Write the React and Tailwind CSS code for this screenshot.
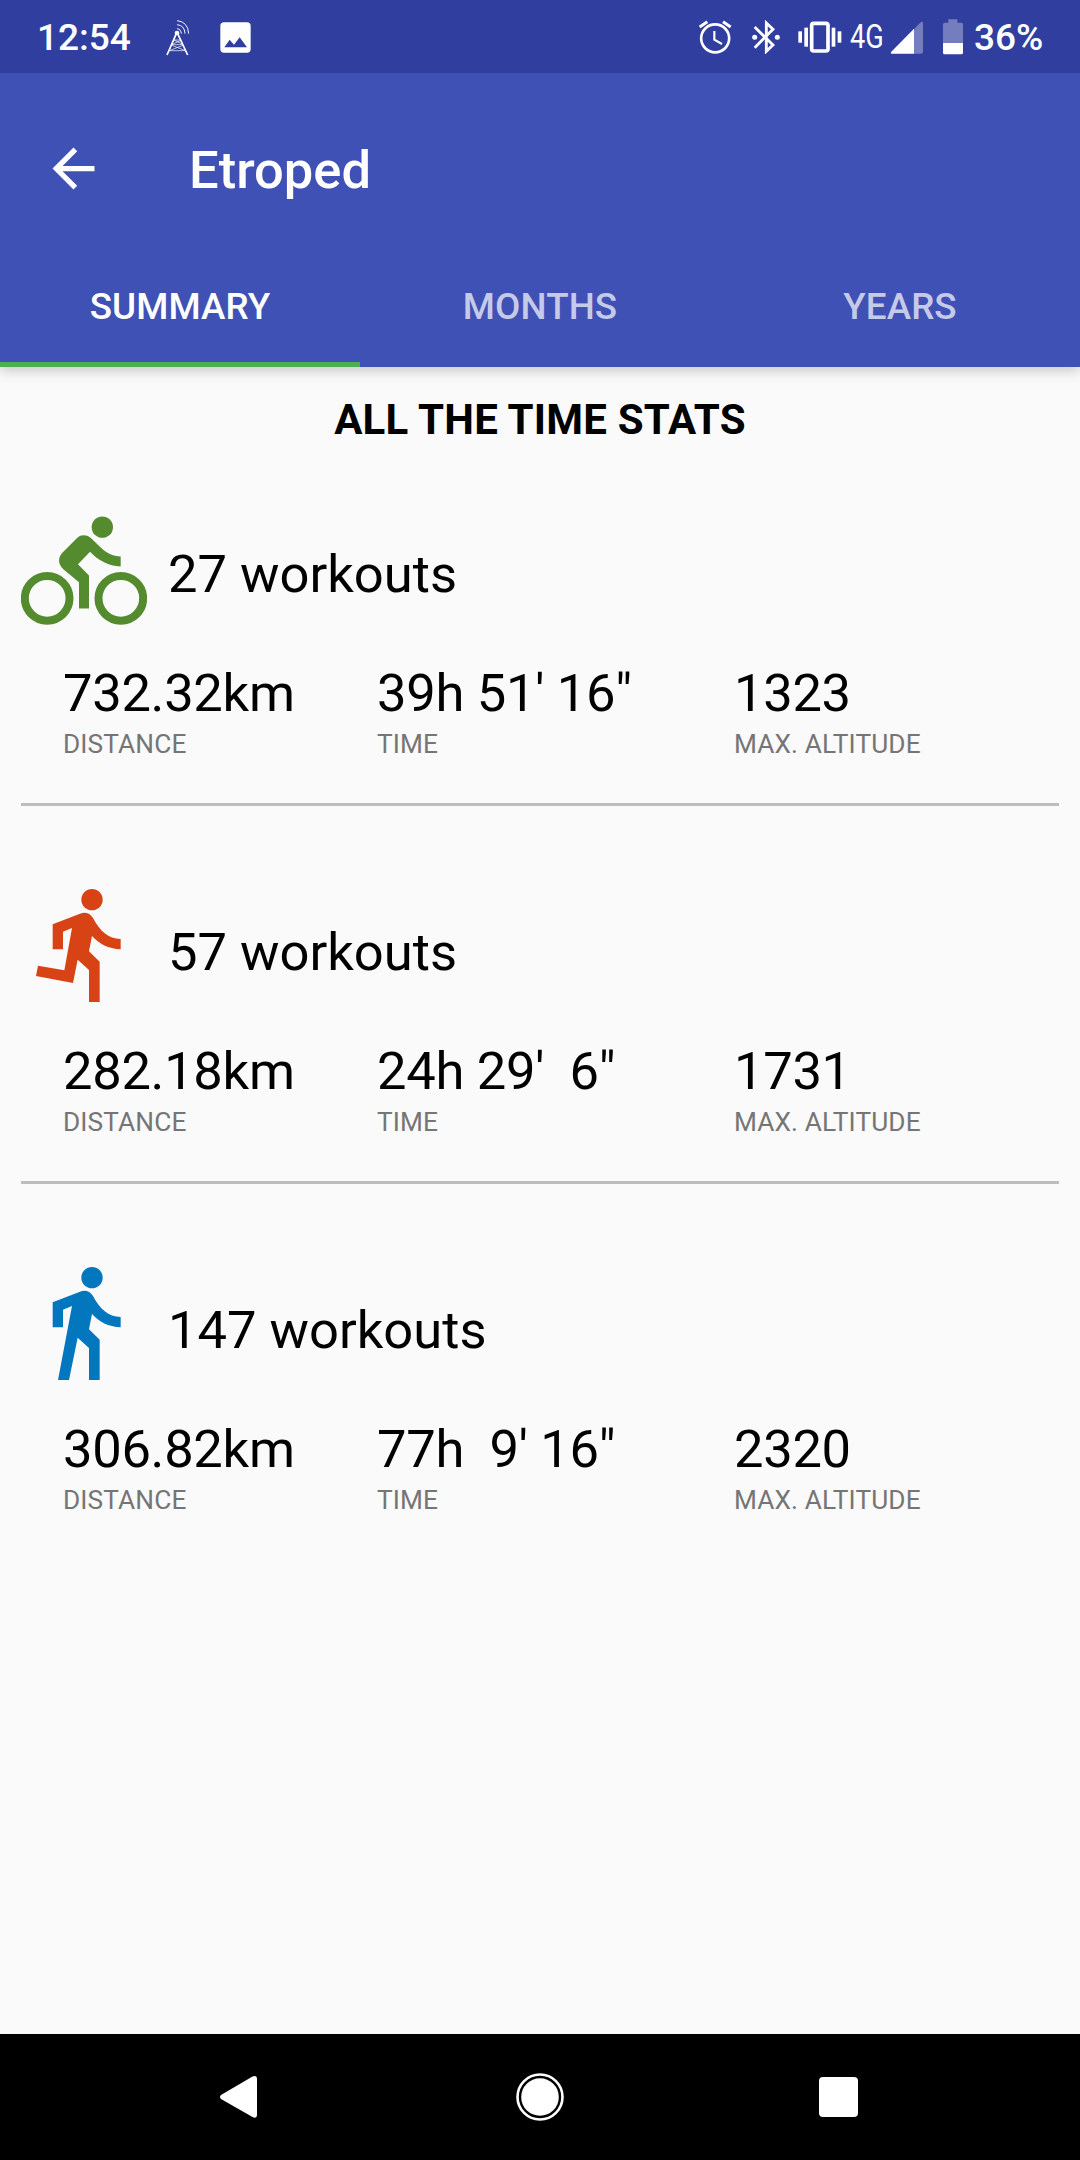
import React from "react";

const AntennaIcon = () => (
  <svg className="block h-[40px] w-[26px]" viewBox="495 48 78 120" fill="none" stroke="#fff">
    <circle cx="531" cy="96" r="7" fill="#fff" stroke="none" />
    <path d="M529 98 L501 162 M533 98 L563 162" strokeWidth="5" />
    <path d="M522 117 H541 M522 117 L548 130 M541 119 L514 131 M514 131 H548 M514 132 L556 149 M549 133 L508 149 M508 149 L556 149" strokeWidth="2" />
    <path d="M531 83 Q543 84 544 98 M531 71 Q554 73 555 98 M531 59 Q564 62 566 98" strokeWidth="2.8" />
  </svg>
);

const ImageIcon = () => (
  <svg className="block h-[31px] w-[31px]" viewBox="0 0 93 93">
    <path fillRule="evenodd" fill="#fff" d="M12 1 H81 Q92 1 92 12 V81 Q92 92 81 92 H12 Q1 92 1 81 V12 Q1 1 12 1 Z M13 76 H81 L59 46 L42 68 L29 53 Z" />
  </svg>
);

const AlarmIcon = () => (
  <svg className="block h-[34px] w-[34px]" viewBox="53 58 102 102" fill="none" stroke="#fff">
    <circle cx="104.500" cy="113" r="42" strokeWidth="8" />
    <path d="M58 79 L81 63 M128 63 L151 79" strokeWidth="9" />
    <path d="M102 91 V117 L125 130" strokeWidth="6.500" />
  </svg>
);

const BluetoothIcon = () => (
  <svg className="block h-[34px] w-[30px]" viewBox="212 58 90 102" fill="none" stroke="#fff">
    <path d="M223 79 L278 133 L258 152 V67 L278 86 L223 141" strokeWidth="8.500" />
    <circle cx="223" cy="110" r="7.500" fill="#fff" stroke="none" />
    <circle cx="291" cy="110" r="7.500" fill="#fff" stroke="none" />
  </svg>
);

const VibrateIcon = () => (
  <svg className="block h-[34px] w-[44px]" viewBox="353 58 132 102" fill="#fff">
    <rect x="354" y="92" width="11" height="34" />
    <rect x="372" y="81" width="11" height="57" />
    <rect x="454" y="81" width="11" height="57" />
    <rect x="472" y="92" width="11" height="34" />
    <rect x="394" y="68" width="49" height="83" rx="6" fill="none" stroke="#fff" strokeWidth="11" />
  </svg>
);

const SignalIcon = () => (
  <svg className="block h-[34px] w-[34px]" viewBox="630 60 102 102" fill="#fff">
    <path d="M702 88 L722 67 Q729 62 729 70 V155 Q729 161 723 161 H702 Z" opacity="0.330" />
    <path d="M702 86 V161 H636 Q630 160 634 155 Z" />
  </svg>
);

const BatteryIcon = () => (
  <svg className="block h-[36px] w-[20px]" viewBox="788 56 60 108" fill="#fff">
    <path d="M804 57 H831 V67 H843 Q848 67 848 72 V128 H788 V72 Q788 67 793 67 H804 Z" opacity="0.330" />
    <path d="M788 128 H848 V157 Q848 162 843 162 H793 Q788 162 788 157 Z" />
  </svg>
);

const BikeIcon = () => (
  <svg className="block h-[126px] w-[126px]" viewBox="63 55.500 378 378" fill="#558b2f">
    <circle cx="307" cy="110" r="32" />
    <circle cx="141.500" cy="323.500" r="67" fill="none" stroke="#558b2f" strokeWidth="24" />
    <circle cx="362.500" cy="323.500" r="67" fill="none" stroke="#558b2f" strokeWidth="24" />
    <path d="M237 354 V275 L190 236 C174 222 173 202 187 187 L232 142 C242 132 260 132 272 142 L302 171 C320 188 338 197 362 198 V228 C325 226 297 212 270 184 L234 221 L267 255 V354 Z" />
  </svg>
);

const RunIcon = () => (
  <svg className="block h-[126px] w-[126px]" viewBox="63 33 378 378" fill="#d84315">
    <circle cx="276" cy="89" r="32" />
    <path d="M158 163 L240 131 C256 125 270 130 279 144 C300 184 325 206 362 207 V238 C325 236 297 222 276 198 L267 244 L299 275 V396 H267 V300 L233 269 L219 339 L108 318 L114 287 L193 301 L216 174 L189 185 V238 H158 Z" />
  </svg>
);

const WalkIcon = () => (
  <svg className="block h-[126px] w-[126px]" viewBox="63 27 378 378" fill="#0277bd">
    <circle cx="276" cy="83" r="32" />
    <path d="M158 157 L240 125 C256 119 270 124 279 138 C300 178 325 200 362 201 V232 C325 230 297 216 276 192 L267 238 L299 269 V390 H267 V294 L233 263 L207 390 H174 L216 168 L189 179 V232 H158 Z" />
  </svg>
);

const sports = [
  { Icon: BikeIcon, iconClass: "mt-[6px]", count: 27, distance: "732.32km", time: "39h 51' 16\"", altitude: "1323" },
  { Icon: RunIcon, iconClass: "", count: 57, distance: "282.18km", time: "24h 29'  6\"", altitude: "1731" },
  { Icon: WalkIcon, iconClass: "", count: 147, distance: "306.82km", time: "77h  9' 16\"", altitude: "2320" },
];

function Stat({ value, label }) {
  return (
    <div>
      <div className="whitespace-pre text-[52.5px] leading-[62px] tracking-[-0.3px] text-black">{value}</div>
      <div className="mt-[4px] text-[26.25px] leading-[32px] tracking-[0.12px] text-[#757575]">{label}</div>
    </div>
  );
}

function SportSection({ sport, last }) {
  const { Icon } = sport;
  return (
    <section className="mx-[21px] h-[378px]">
      <div className="flex h-[159px] items-start">
        <div className={sport.iconClass}>
          <Icon />
        </div>
        <div className="ml-[21px] mt-[40px] text-[52.5px] leading-[62px] text-black">{sport.count} workouts</div>
      </div>
      <div className="grid h-[141px] grid-cols-[314px_357px_1fr] pl-[42px]">
        <Stat value={sport.distance} label="DISTANCE" />
        <Stat value={sport.time} label="TIME" />
        <Stat value={sport.altitude} label="MAX. ALTITUDE" />
      </div>
      {!last && <div className="h-[3px] bg-[#bdbdbd]" />}
    </section>
  );
}

function StatusBar() {
  return (
    <div className="relative z-10 flex h-[73px] items-center bg-[#303f9f] pl-[37px] pr-[37px] text-[37px] font-medium leading-[44px] text-white">
      <span className="mt-[3px] w-[128px]">12:54</span>
      <AntennaIcon />
      <div className="ml-[29px] mt-[1px]">
        <ImageIcon />
      </div>
      <div className="ml-auto flex items-center">
        <AlarmIcon />
        <div className="ml-[19px]">
          <BluetoothIcon />
        </div>
        <div className="ml-[17px]">
          <VibrateIcon />
        </div>
        <span className="ml-[8px] mt-[1px] w-[40px] origin-left scale-x-[0.82] text-[33px] font-normal">4G</span>
        <div className="mt-[1px]">
          <SignalIcon />
        </div>
        <div className="ml-[19px]">
          <BatteryIcon />
        </div>
        <span className="ml-[11px] mt-[3px] w-[69px]">36%</span>
      </div>
    </div>
  );
}

const tabs = ["SUMMARY", "MONTHS", "YEARS"];

export default function App() {
  return (
    <div className="flex h-[2160px] w-[1080px] flex-col overflow-hidden bg-[#fafafa] font-[Roboto,sans-serif]">
      <StatusBar />
      <header className="h-[294px] bg-[#3f51b5] text-white shadow-[0_4px_12px_rgba(0,0,0,0.200)]">
        <div className="flex h-[168px] items-start pl-[42px]">
          <svg className="mt-[63.5px] block h-[63px] w-[63px]" viewBox="0 0 24 24" fill="#fff">
            <path d="M20 11H7.830l5.590-5.590L12 4l-8 8 8 8 1.410-1.410L7.830 13H20v-2z" />
          </svg>
          <h1 className="ml-[84px] mt-[66px] text-[52.5px] font-medium leading-[62px]">Etroped</h1>
        </div>
        <nav className="grid h-[126px] grid-cols-3">
          {tabs.map((tab, i) => (
            <div
              key={tab}
              className={
                i === 0
                  ? "border-b-[5px] border-[#4caf50] pt-[44px] text-center text-[36.75px] font-medium leading-[44px] tracking-[0.1px]"
                  : "pt-[44px] text-center text-[36.75px] font-medium leading-[44px] tracking-[0.1px] text-[#c5cae9]"
              }
            >
              {tab}
            </div>
          ))}
        </nav>
      </header>
      <main className="flex-1">
        <h2 className="h-[136px] pt-[28px] text-center text-[42px] font-bold leading-[50px] tracking-[0.22px] text-black">ALL THE TIME STATS</h2>
        {sports.map((sport, i) => (
          <SportSection key={sport.count} sport={sport} last={i === sports.length - 1} />
        ))}
      </main>
      <footer className="flex h-[126px] items-center bg-black pl-[219px]">
        <svg className="block h-[44px] w-[38px]" viewBox="0 0 38 44" fill="#fff">
          <path d="M33.500 1.500 Q38 0 38 4 V40 Q38 44 33.500 42 L2 24 Q0 22 2 20 Z" />
        </svg>
        <svg className="ml-[258px] block h-[50px] w-[50px]" viewBox="0 0 50 50">
          <circle cx="25" cy="25" r="22.500" fill="none" stroke="#fff" strokeWidth="2.600" />
          <circle cx="25" cy="25" r="18.800" fill="#fff" />
        </svg>
        <div className="ml-[254px] h-[40px] w-[39px] rounded-[4px] bg-white" />
      </footer>
    </div>
  );
}
